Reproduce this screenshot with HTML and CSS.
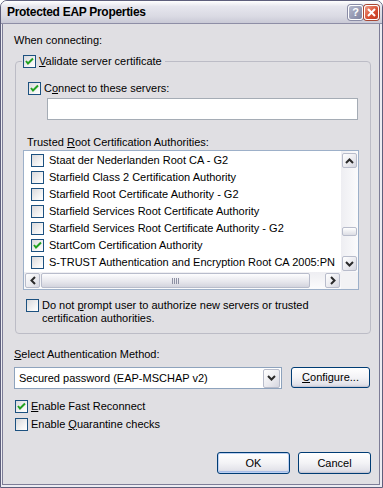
FILE: index.html
```html
<!DOCTYPE html>
<html lang="en">
<head>
  <meta charset="UTF-8">
  <title>Protected EAP Properties</title>
  <link rel="stylesheet" href="styles.css">
</head>
<body>
  <div class="window">
    <div class="titlebar">
      <span class="title">Protected EAP Properties</span>
      <span class="capbtn help">?</span>
      <span class="capbtn close">
        <svg width="9" height="9" viewBox="0 0 9 9"><path d="M1 1L8 8M8 1L1 8" stroke="#fff" stroke-width="2"/></svg>
      </span>
    </div>
    <div class="client">
      <p class="heading">When connecting:</p>
      <fieldset class="group">
        <legend>
          <label class="check"><span class="cb on"><svg viewBox="0 0 11 11"><path d="M2 5l2 2.5 5-5"/></svg></span><span><u>V</u>alidate server certificate</span></label>
        </legend>
        <label class="check servers"><span class="cb on"><svg viewBox="0 0 11 11"><path d="M2 5l2 2.5 5-5"/></svg></span><span>C<u>o</u>nnect to these servers:</span></label>
        <div class="textbox"></div>
        <p class="listlabel">Trusted <u>R</u>oot Certification Authorities:</p>
        <div class="listbox">
          <div class="listmain">
            <div class="rows">
              <div class="row"><span class="cb"></span>Staat der Nederlanden Root CA - G2</div>
              <div class="row"><span class="cb"></span>Starfield Class 2 Certification Authority</div>
              <div class="row"><span class="cb"></span>Starfield Root Certificate Authority - G2</div>
              <div class="row"><span class="cb"></span>Starfield Services Root Certificate Authority</div>
              <div class="row"><span class="cb"></span>Starfield Services Root Certificate Authority - G2</div>
              <div class="row"><span class="cb on"><svg viewBox="0 0 11 11"><path d="M2 5l2 2.5 5-5"/></svg></span>StartCom Certification Authority</div>
              <div class="row"><span class="cb"></span>S-TRUST Authentication and Encryption Root CA 2005:PN</div>
            </div>
            <div class="vscroll">
              <span class="sbtn"><svg width="9" height="6" viewBox="0 0 9 6"><path d="M1 5l3.5-3.5L8 5" /></svg></span>
              <div class="vtrack"><span class="vthumb"></span></div>
              <span class="sbtn"><svg width="9" height="6" viewBox="0 0 9 6"><path d="M1 1l3.5 3.5L8 1" /></svg></span>
            </div>
          </div>
          <div class="hscroll">
            <span class="sbtn"><svg width="6" height="9" viewBox="0 0 6 9"><path d="M5 1L1.5 4.5 5 8" /></svg></span>
            <div class="htrack"><span class="hthumb"><i></i><i></i><i></i><i></i></span></div>
            <span class="sbtn"><svg width="6" height="9" viewBox="0 0 6 9"><path d="M1 1l3.5 3.5L1 8" /></svg></span>
            <span class="corner"></span>
          </div>
        </div>
        <label class="check prompt"><span class="cb"></span><span>Do not <u>p</u>rompt user to authorize new servers or trusted certification authorities.</span></label>
      </fieldset>
      <p class="heading method-label"><u>S</u>elect Authentication Method:</p>
      <div class="methodrow">
        <div class="select">
          <span class="value">Secured password (EAP-MSCHAP v2)</span>
          <span class="sbtn drop"><svg width="9" height="6" viewBox="0 0 9 6"><path d="M1 1l3.5 3.5L8 1" /></svg></span>
        </div>
        <button class="btn configure"><u>C</u>onfigure...</button>
      </div>
      <label class="check option"><span class="cb on"><svg viewBox="0 0 11 11"><path d="M2 5l2 2.5 5-5"/></svg></span><span><u>E</u>nable Fast Reconnect</span></label>
      <label class="check option"><span class="cb"></span><span>Enable <u>Q</u>uarantine checks</span></label>
      <div class="actions">
        <button class="btn default">OK</button>
        <button class="btn">Cancel</button>
      </div>
    </div>
  </div>
</body>
</html>
```
FILE: styles.css
```css
* {
  margin: 0;
  padding: 0;
  box-sizing: border-box;
}
body {
  font: 11px/13px "Liberation Sans", Tahoma, sans-serif;
  color: #000;
  background: #fff;
}
u {
  text-decoration: underline;
}
.window {
  width: 383px;
  height: 488px;
  border: 1px solid #5e5f7c;
  border-radius: 7px 7px 0 0;
  background: #ececf2;
  display: flex;
  flex-direction: column;
  overflow: hidden;
}

/* title bar */
.titlebar {
  height: 23px;
  display: flex;
  align-items: center;
  padding: 0 3px 0 6px;
  border-bottom: 1px solid #8e8ea6;
  background: linear-gradient(#ffffff 0%, #e6e6ee 25%, #dadae3 70%, #c9c9d6 100%);
}
.titlebar .title {
  flex: 1;
  font-weight: 700;
  font-size: 12px;
  letter-spacing: -0.3px;
  color: #000;
}
.capbtn {
  width: 15px;
  height: 15px;
  margin-left: 1px;
  border: 1px solid #fff;
  border-radius: 3px;
  display: flex;
  align-items: center;
  justify-content: center;
  color: #fff;
  font-weight: 700;
  font-size: 11px;
}
.capbtn.help {
  background: linear-gradient(135deg, #b5b8cc, #7e82a0);
  box-shadow: 0 0 0 1px #8a8ca6;
}
.capbtn.close {
  background: linear-gradient(135deg, #f09a84, #d64b2f 60%, #c23a22);
  box-shadow: 0 0 0 1px #a84632;
}

/* client area */
.client {
  flex: 1;
  margin: 0 2px 2px 1px;
  border: 1px solid #7d7d97;
  border-top: none;
  background: #e0dfe3;
  padding: 10px 8px 0 11px;
}
.heading {
  height: 13px;
}
.check {
  display: flex;
  align-items: flex-start;
  gap: 3px;
}
.cb {
  flex: none;
  width: 13px;
  height: 13px;
  border: 1px solid #1c5180;
  background: linear-gradient(135deg, #d9d9dc, #f6f6f6 70%, #fff);
  display: block;
}
.cb svg {
  display: block;
  width: 11px;
  height: 11px;
}
.cb path {
  fill: none;
  stroke: #21a121;
  stroke-width: 2;
}

/* group box */
.group {
  margin: 8px 0 0 1px;
  border: 1px solid #bcbcc6;
  border-radius: 4px;
  padding: 0 0 8px;
}
.group legend {
  margin-left: 6px;
  padding: 0 3px 0 1px;
}
.servers {
  margin: 14px 0 0 12px;
}
.textbox {
  margin: 3px 0 0 31px;
  width: 311px;
  height: 22px;
  background: #fff;
  border: 1px solid #a5acb5;
}
.listlabel {
  margin: 16px 0 0 11px;
}
.listbox {
  margin: 1px 0 0 7px;
  width: 336px;
  border: 1px solid #9db0c9;
  background: #fff;
}
.listmain {
  display: flex;
  height: 121px;
}
.rows {
  flex: 1;
  padding-top: 1px;
  overflow: hidden;
}
.row {
  height: 17px;
  display: flex;
  align-items: center;
  gap: 5px;
  padding-left: 7px;
  white-space: nowrap;
}

/* scrollbars */
.sbtn {
  flex: none;
  width: 15px;
  height: 15px;
  border: 1px solid #b8bccb;
  border-radius: 2px;
  background: linear-gradient(135deg, #ffffff, #e9e9ee 60%, #d5d6df);
  display: flex;
  align-items: center;
  justify-content: center;
}
.sbtn path {
  fill: none;
  stroke: #2a2a2a;
  stroke-width: 2;
}
.vscroll {
  width: 17px;
  display: flex;
  flex-direction: column;
  align-items: center;
  padding: 2px 0 1px;
  background: linear-gradient(to right, #eeeef2, #fbfbfc);
}
.vtrack {
  flex: 1;
  width: 15px;
}
.vthumb {
  display: block;
  margin-top: 59px;
  height: 9px;
  border: 1px solid #b8bccb;
  border-radius: 2px;
  background: linear-gradient(#fff, #dcdde4);
}
.hscroll {
  display: flex;
  align-items: center;
  height: 17px;
  padding-left: 1px;
  background: linear-gradient(#eeeef2, #fbfbfc);
}
.htrack {
  flex: 1;
  height: 15px;
  padding: 0 15px 0 1px;
}
.hthumb {
  display: flex;
  justify-content: center;
  align-items: center;
  gap: 1px;
  height: 15px;
  border: 1px solid #b8bccb;
  border-radius: 2px;
  background: linear-gradient(#fdfdfe, #e6e6ec 60%, #d3d4dd);
}
.hthumb i {
  width: 1px;
  height: 6px;
  background: #8d90a3;
}
.corner {
  width: 17px;
  height: 17px;
  margin-left: 1px;
  background: #f2f2f4;
}
.prompt {
  margin: 9px 0 0 10px;
  padding-right: 30px;
}

/* authentication method */
.method-label {
  margin-top: 14px;
}
.methodrow {
  display: flex;
  align-items: flex-start;
  gap: 9px;
  margin-top: 6px;
}
.select {
  width: 268px;
  height: 22px;
  border: 1px solid #8ea3bd;
  background: #fff;
  display: flex;
  align-items: center;
  padding: 0 1px 0 4px;
}
.select .value {
  flex: 1;
}
.select .drop {
  width: 17px;
  height: 19px;
}
.btn {
  font: inherit;
  color: #000;
  height: 22px;
  border: 1px solid #003c74;
  border-radius: 3px;
  background: linear-gradient(#ffffff, #f3f3f6 50%, #e3e3ea 85%, #cfcfda);
  box-shadow: inset 0 -1px 0 #c5c6d4;
}
.configure {
  width: 79px;
  height: 21px;
}
.option {
  margin: 11px 0 0 1px;
}
.option + .option {
  margin-top: 5px;
}
.actions {
  display: flex;
  justify-content: flex-end;
  gap: 8px;
  margin-top: 21px;
}
.actions .btn {
  width: 73px;
}
.btn.default {
  box-shadow: inset 0 0 0 1px #bcd0f2, inset 0 -1px 0 1px #a9bde6;
}
```
